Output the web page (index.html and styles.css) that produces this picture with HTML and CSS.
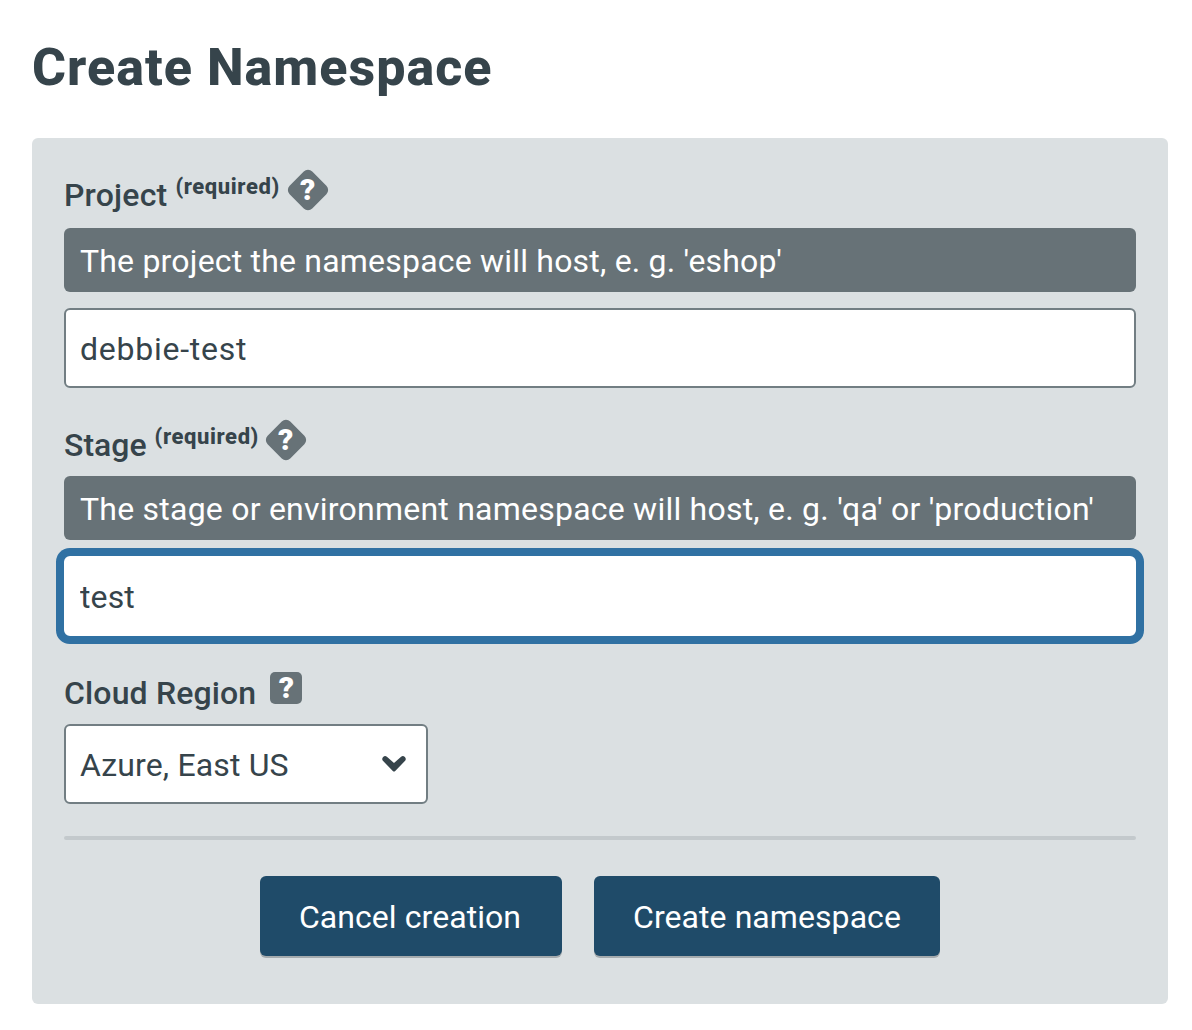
FILE: index.html
```html
<!DOCTYPE html>
<html lang="en">
<head>
<meta charset="utf-8">
<title>Create Namespace</title>
<link rel="stylesheet" href="styles.css">
</head>
<body>
<main class="page">
  <h1 class="title">Create Namespace</h1>
  <form class="panel">
    <div class="label-row label-project">
      <label class="label" for="project">Project</label>
      <span class="required">(required)</span>
      <span class="help help-open"><span class="help-mark">?</span></span>
    </div>
    <p class="hint"><span class="hint-project">The project the namespace will host, e. g. 'eshop'</span></p>
    <input class="field field-project" id="project" type="text" value="debbie-test">

    <div class="label-row label-stage">
      <label class="label" for="stage">Stage</label>
      <span class="required">(required)</span>
      <span class="help help-open"><span class="help-mark">?</span></span>
    </div>
    <p class="hint"><span class="hint-stage">The stage or environment namespace will host, e. g. 'qa' or 'production'</span></p>
    <input class="field field-stage is-focused" id="stage" type="text" value="test">

    <div class="label-row label-region">
      <span class="label">Cloud Region</span>
      <span class="help"><span class="help-mark">?</span></span>
    </div>
    <div class="select">
      <span class="select-value">Azure, East US</span>
      <svg class="chevron" width="24" height="16" viewBox="0 0 24 16"><path d="M0.9 4.8A2.9 2.9 0 0 1 4.9 0.7L12 7 19.1 0.7A2.9 2.9 0 0 1 23.1 4.8L13.2 14.9Q12 16 10.8 14.9Z" fill="#36444b"/></svg>
    </div>

    <hr class="divider">
    <div class="actions">
      <button class="button button-cancel" type="button"><span>Cancel creation</span></button>
      <button class="button button-create" type="button"><span>Create namespace</span></button>
    </div>
  </form>
</main>
</body>
</html>
```
FILE: styles.css
```css
* { box-sizing: border-box; }

body {
  margin: 0;
  background: #fff;
  color: #36444b;
  font-family: Roboto, "Liberation Sans", sans-serif;
  font-size: 32px;
}

.page { padding: 36px 24px 26px 32px; }

.title {
  margin: 0 0 38px;
  font-size: 52px;
  line-height: 64px;
  font-weight: 800;
  letter-spacing: 1.02px;
  white-space: nowrap;
}

.panel {
  height: 866px;
  padding: 32px;
  border-radius: 6px;
  background: #dbe0e2;
}

.label-row { display: flex; align-items: flex-start; height: 58px; }
.label-stage { height: 56px; margin-top: 32px; }
.label-region { height: 56px; margin-top: 32px; }

.label {
  padding-top: 5px;
  line-height: 40px;
  font-weight: 500;
  letter-spacing: .2px;
  white-space: nowrap;
}
.label-stage .label { letter-spacing: 0; }
.label-region .label { letter-spacing: .15px; }

.required {
  padding: 3px 0 0 8px;
  font-size: 22px;
  line-height: 28px;
  font-weight: 800;
  letter-spacing: .6px;
}

.help {
  display: flex;
  align-items: center;
  justify-content: center;
  width: 32px;
  height: 32px;
  margin: 4px 0 0 12px;
  border-radius: 5px;
  background: #677277;
  color: #fff;
}
.label-stage .help { margin-left: 11px; }
.label-region .help { margin-left: 14px; }
.help-open { border-radius: 6px; transform: rotate(45deg); }
.help-open .help-mark { transform: rotate(-45deg); }
.help-mark { font-size: 30px; line-height: 32px; font-weight: 900; }

.hint {
  height: 64px;
  margin: 0 0 16px;
  padding: 1px 0 0 16px;
  border-radius: 6px;
  background: #677277;
  color: #fff;
  line-height: 64px;
  white-space: nowrap;
}
.hint-project { letter-spacing: .2px; }
.hint-stage { letter-spacing: .23px; }

.field {
  display: block;
  width: 100%;
  height: 80px;
  padding: 2px 14px 0;
  border: 2px solid #727e83;
  border-radius: 6px;
  outline: none;
  background: #fff;
  color: inherit;
  font: inherit;
}
.field-project { letter-spacing: .75px; }
.field-stage { letter-spacing: .1px; }
.is-focused { border-color: #fff; box-shadow: 0 0 0 8px #3071a3; }

.select {
  display: flex;
  align-items: center;
  justify-content: space-between;
  width: 364px;
  height: 80px;
  padding: 0 20px 0 14px;
  border: 2px solid #727e83;
  border-radius: 6px;
  background: #fff;
  letter-spacing: .15px;
}
.select-value { padding-top: 2px; }

.divider {
  height: 4px;
  margin: 32px 0 36px;
  border: 0;
  border-radius: 2px;
  background: #c3c9cc;
}

.actions { display: flex; justify-content: center; gap: 32px; }

.button {
  height: 80px;
  padding: 2px 0 0;
  border: 0;
  border-radius: 6px;
  background: #1f4b69;
  box-shadow: 0 2px 0 #a5abae;
  color: #fff;
  font: inherit;
  letter-spacing: .07px;
}
.button-cancel { width: 302px; padding-right: 2px; }
.button-create { width: 346px; }
```
